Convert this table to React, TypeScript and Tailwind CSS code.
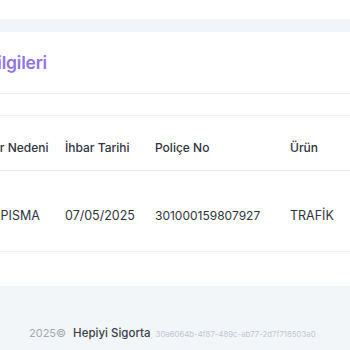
export default function App() {
  return (
    <div
      className="w-[350px] h-[350px] overflow-hidden bg-white flex flex-col"
      style={{ fontFamily: "Inter, 'Noto Sans', sans-serif" }}
    >
      <div className="h-[19px] shrink-0 bg-white" />
      <div className="h-[13px] shrink-0 bg-[#f1f4f8]" />

      {/* claim details card */}
      <div className="flex flex-col bg-white h-[254px] shrink-0">
        <div className="h-[62px] border-b border-[#eef0f3] flex items-center overflow-hidden">
          <h2 className="ml-[-67px] pt-[2px] text-[17.5px] font-semibold text-[#8f74e3] whitespace-nowrap tracking-[-0.2px]">
            Hasar Bilgileri
          </h2>
        </div>
        <div className="h-[22px] border-b border-[#f1f2f4]" />
        <div className="overflow-hidden">
          <div className="ml-[-25px] grid grid-cols-[90px_90px_135px_1fr] text-[#30343c] whitespace-nowrap">
            <div className="h-[55px] pt-[9px] flex items-center text-[12px] font-medium border-b border-[#e9ebee]">İhbar Nedeni</div>
            <div className="h-[55px] pt-[9px] flex items-center text-[12px] font-medium border-b border-[#e9ebee]">İhbar Tarihi</div>
            <div className="h-[55px] pt-[9px] flex items-center text-[12px] font-medium border-b border-[#e9ebee]">Poliçe No</div>
            <div className="h-[55px] pt-[9px] flex items-center text-[12px] font-medium border-b border-[#e9ebee]">Ürün</div>

            <div className="h-[81px] pt-[10px] flex items-center text-[12.5px] border-b border-[#f1f2f4]">CARPISMA</div>
            <div className="h-[81px] pt-[10px] flex items-center text-[12.5px] border-b border-[#f1f2f4]">07/05/2025</div>
            <div className="h-[81px] pt-[10px] flex items-center text-[12px] border-b border-[#f1f2f4]">301000159807927</div>
            <div className="h-[81px] pt-[10px] flex items-center text-[12.5px] border-b border-[#f1f2f4]">TRAFİK</div>
          </div>
        </div>
      </div>

      {/* footer */}
      <footer className="flex-1 bg-[#f3f6f9] flex items-end pb-[8px]">
        <div className="ml-[29px] flex items-baseline whitespace-nowrap">
          <span className="text-[11px] text-[#a3a8b0]">2025©</span>
          <span className="ml-[7px] text-[11.5px] font-medium text-[#3a3f48]">Hepiyi Sigorta</span>
          <span className="ml-[5px] text-[7.8px] text-[#c2c6cd]">30a6064b-4f87-489c-ab77-2d7f718503a0</span>
        </div>
      </footer>
    </div>
  );
}
